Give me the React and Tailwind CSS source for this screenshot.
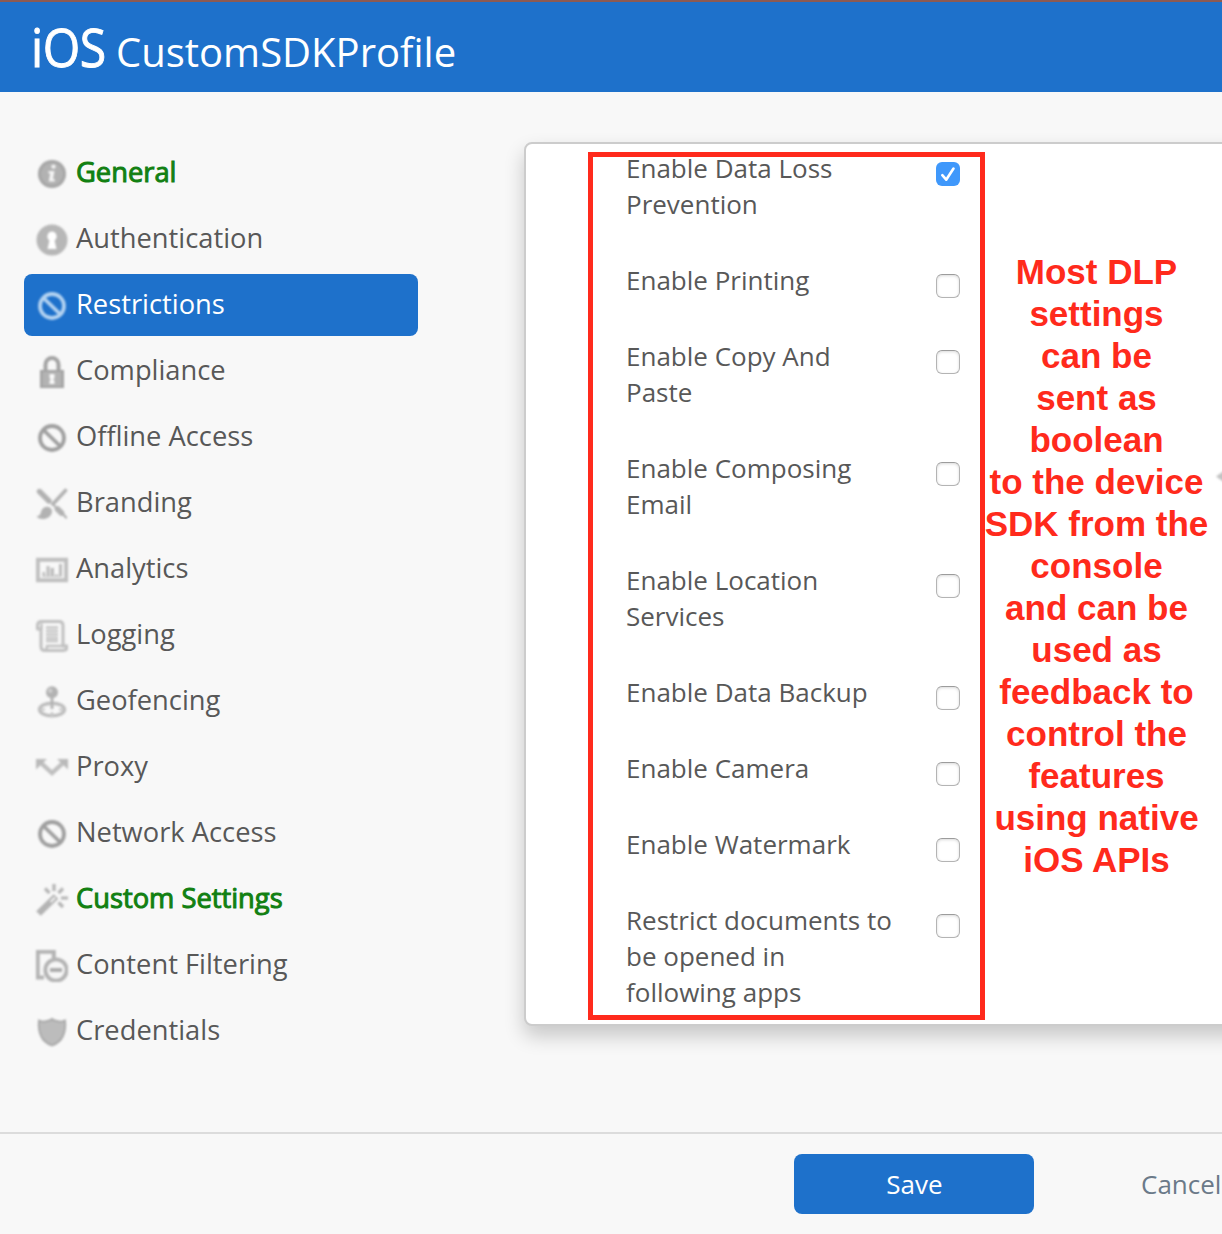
import React from "react";

const Ban = ({ color = "#9f9f9f" }) => (
  <g fill="none" stroke={color} strokeWidth="3.8">
    <circle cx="16" cy="16" r="12" />
    <path d="M8 8.5 23.5 23.5" />
  </g>
);

const icons = {
  info: (
    <>
      <circle cx="16" cy="16" r="14" fill="#a6a6a6" />
      <circle cx="16" cy="16" r="11" fill="#b2b2b2" />
      <circle cx="17.5" cy="8.600" r="2.200" fill="#f4f4f4" />
      <path d="M12.500 13H18.500l-1.500 8h1.700v2.500h-6l1.500-8h-1.700z" fill="#f4f4f4" />
    </>
  ),
  auth: (
    <>
      <circle cx="16" cy="16" r="15.500" fill="#b7b7b7" />
      <path d="M16 7.500a5 5 0 0 1 2.600 9L20.500 25h-9l1.900-8.500A5 5 0 0 1 16 7.500z" fill="#fff" />
    </>
  ),
  banLight: <Ban color="#b4d3f1" />,
  ban: <Ban />,
  lock: (
    <>
      <path d="M9.500 15V8.500a6.500 6.500 0 0 1 13 0V15" fill="none" stroke="#a3a3a3" strokeWidth="4" />
      <path d="M4 14h24v18H4z" fill="#a3a3a3" />
      <path d="M6.500 16h19v14h-19z" fill="#b3b3b3" />
      <path d="M13.500 18h5v4.500h-1v2h1V28h-5v-3.500h1v-2h-1z" fill="#fafafa" />
    </>
  ),
  brush: (
    <g fill="#b2b2b2" stroke="#b2b2b2" strokeLinecap="round">
      <path d="M3.500 3.500 13 13" strokeWidth="5.400" />
      <path d="M29.500 2.500 17 16" strokeWidth="3.600" />
      <path d="M16 15.500 20 19.500" strokeWidth="2" />
      <path d="M21.500 21 25.500 25" strokeWidth="5.600" />
      <path d="M27 26 30 29.500" strokeWidth="2.400" />
      <path d="M2 29c4-1 3-5 5-7.500 2.500-3 7-2.500 8 .5 1 3.500-1.500 6.500-4.500 7.500S4.500 31 2 29z" strokeWidth="1.500" />
    </g>
  ),
  chart: (
    <>
      <path d="M1.800 5.800h28.400v20.400H1.800z" fill="none" stroke="#bfbfbf" strokeWidth="4" />
      <path d="M6.500 22.500v-4.500h2.500v4.500zM10.500 22.500V12h3v10.500zM14.500 22.500V14h3.500v8.500zM19 22.500v-2h3v2zM23 22.500V10h3v12.500z" fill="#bdbdbd" />
      <path d="M6.500 21.500h19.500v1.500H6.500z" fill="#c9c9c9" />
    </>
  ),
  scroll: (
    <>
      <path d="M1.500 9V5.500q0-4 4-4H23q4 0 4 4V26h4v1q0 3.500-4 3.500H9q-4 0-4-4V9H1.500z" fill="none" stroke="#c0c0c0" strokeWidth="3" strokeLinejoin="round" />
      <path d="M5.500 3.500V9M9.500 30q1.500-1 1.500-4h18" fill="none" stroke="#c0c0c0" strokeWidth="2.400" />
      <path d="M10 7.500h12M10 11h12M10 14.500h12M10 18h12M10 21h12" stroke="#c6c6c6" strokeWidth="2.400" />
    </>
  ),
  pin: (
    <>
      <ellipse cx="16" cy="23.500" rx="12.500" ry="6.300" fill="none" stroke="#bdbdbd" strokeWidth="3.400" />
      <path d="M16 10v13" stroke="#b2b2b2" strokeWidth="2.800" />
      <path d="M16 26v5M4 23.500h5M23 23.500h5" stroke="#c6c6c6" strokeWidth="2" />
      <circle cx="16" cy="6.300" r="6" fill="#b2b2b2" />
      <circle cx="14.300" cy="4.800" r="2.200" fill="#cfcfcf" />
    </>
  ),
  proxy: (
    <>
      <path d="M4.500 10.500 16 21 27.500 10.500" fill="none" stroke="#bfbfbf" strokeWidth="4.400" />
      <path d="M0 7h11L0 17.500zM32 7H21L32 17.500z" fill="#bababa" />
    </>
  ),
  wand: (
    <>
      <path d="M2.500 29.500 20 12.500" stroke="#b4b4b4" strokeWidth="6.600" />
      <path d="M14.500 18 19 13.500" stroke="#f4f4f4" strokeWidth="2" />
      <path d="M18 0v7M9 4.500l4.500 4.500M27 4.500 22.500 9M25 14h7M22.500 18.500 27 23" stroke="#b4b4b4" strokeWidth="3.200" />
    </>
  ),
  filter: (
    <>
      <path d="M8 27.500H1.700V1.700h16.100V8" fill="none" stroke="#b3b3b3" strokeWidth="4" />
      <circle cx="20" cy="20" r="10.700" fill="#f6f6f6" stroke="#b3b3b3" strokeWidth="3.800" />
      <path d="M14 20h12" stroke="#a9a9a9" strokeWidth="3.800" />
    </>
  ),
  shield: (
    <path d="M3 4.500q4 2 8.500.3Q14.500 4.500 16 3q1.500 1.500 4.500 1.800Q25 6.500 29 4.500 30 13 27 20 24 26.500 16 29.500 8 26.500 5 20 2 13 3 4.500z" fill="#bcbcbc" stroke="#a8a8a8" strokeWidth="1.800" />
  ),
};

const items = [
  { label: "General", icon: "info", state: "set" },
  { label: "Authentication", icon: "auth" },
  { label: "Restrictions", icon: "banLight", state: "active" },
  { label: "Compliance", icon: "lock" },
  { label: "Offline Access", icon: "ban" },
  { label: "Branding", icon: "brush" },
  { label: "Analytics", icon: "chart" },
  { label: "Logging", icon: "scroll" },
  { label: "Geofencing", icon: "pin" },
  { label: "Proxy", icon: "proxy" },
  { label: "Network Access", icon: "ban" },
  { label: "Custom Settings", icon: "wand", state: "set" },
  { label: "Content Filtering", icon: "filter" },
  { label: "Credentials", icon: "shield" },
];

const itemStyle = {
  active: "bg-[#1e71cb] text-white",
  set: "text-[#128012] [-webkit-text-stroke:1px_#128012]",
  normal: "text-[#585858]",
};

const settings = [
  { lines: ["Enable Data Loss", "Prevention"], on: true },
  { lines: ["Enable Printing"] },
  { lines: ["Enable Copy And", "Paste"] },
  { lines: ["Enable Composing", "Email"] },
  { lines: ["Enable Location", "Services"] },
  { lines: ["Enable Data Backup"] },
  { lines: ["Enable Camera"] },
  { lines: ["Enable Watermark"] },
  { lines: ["Restrict documents to", "be opened in", "following apps"] },
];

const note = [
  "Most DLP", "settings", "can be", "sent as", "boolean", "to the device", "SDK from the", "console",
  "and can be", "used as", "feedback to", "control the", "features", "using native", "iOS APIs",
];

function Checkbox({ on }) {
  if (on) {
    return (
      <span className="mt-3 flex size-6 items-center justify-center rounded-[6px] bg-[#3f98fb]">
        <svg className="size-6" viewBox="0 0 24 24" fill="none" stroke="#fff" strokeWidth="2.600" strokeLinecap="round" strokeLinejoin="round">
          <path d="M6.300 13.200 10.200 17.700 17.500 6.500" />
        </svg>
      </span>
    );
  }
  return <span className="mt-3 size-6 rounded-[6px] border border-[#b4b4b4] border-t-[#9c9c9c] bg-white shadow-[inset_0_1px_3px_rgba(0,0,0,0.15)]" />;
}

export default function App() {
  return (
    <div className="flex h-[1234px] w-[1222px] flex-col overflow-hidden bg-[#f8f8f8] font-['Open_Sans',sans-serif]">
      <header className="flex h-[92px] shrink-0 items-baseline border-t-2 border-[#8d5a52] bg-[#1e71cb] pl-[31px] text-white">
        <span className="w-[85px] origin-left scale-x-[0.91] whitespace-nowrap text-[53px] leading-[90px] tracking-[-0.5px] [-webkit-text-stroke:0.9px_#fff]">iOS</span>
        <h1 className="-mt-px whitespace-nowrap text-[40px] leading-[88px]">CustomSDKProfile</h1>
      </header>

      <main className="flex h-[1040px] shrink-0 pl-6 pt-[50px]">
        <nav className="flex w-[394px] shrink-0 flex-col gap-1">
          {items.map((item) => (
            <a key={item.label} className={`flex h-[62px] shrink-0 items-center gap-2 rounded-lg pl-3 text-[27.3px] leading-[38px] ${itemStyle[item.state || "normal"]}`}>
              <svg className="mt-0.5 size-8 blur-[0.8px]" viewBox="0 0 32 32">{icons[item.icon]}</svg>
              <span className="-mt-0.5 whitespace-nowrap">{item.label}</span>
            </a>
          ))}
        </nav>

        <section className="relative ml-[106px] h-[884px] w-[760px] shrink-0 rounded-lg border-2 border-[#ccc] bg-white pl-[100px] pt-1.5 shadow-[0_10px_20px_rgba(0,0,0,0.2)]">
          <div className="flex flex-col gap-10">
            {settings.map((s) => (
              <div key={s.lines[0]} className="flex items-start">
                <div className="w-[310px] whitespace-nowrap text-[26px] leading-9 text-[#585858]">
                  {s.lines.map((l) => <div key={l}>{l}</div>)}
                </div>
                <Checkbox on={s.on} />
              </div>
            ))}
          </div>
          <div className="absolute left-[62px] top-2 h-[868px] w-[397px] border-[5px] border-[#ff2a1c]" />
          <div className="absolute left-[450px] top-[107px] w-[241px] whitespace-nowrap text-center font-['Liberation_Sans',sans-serif] text-[35px] font-bold leading-[42px] text-[#ff2a1c]">
            {note.map((l) => <div key={l}>{l}</div>)}
          </div>
          <svg className="absolute left-[690px] top-[323px] h-5 w-3 blur-[1px]" viewBox="0 0 12 20">
            <path d="M0 9.500 9 3v13z" fill="#c4c4c4" />
          </svg>
        </section>
      </main>

      <footer className="flex h-[102px] shrink-0 items-start border-t-2 border-[#dcdcdc] pl-[794px] pt-5 text-[26px]">
        <button className="h-[60px] w-[240px] shrink-0 rounded-lg bg-[#1e71cb] pl-px text-white">Save</button>
        <button className="ml-[107px] h-[60px] text-[#6b7a89]">Cancel</button>
      </footer>
    </div>
  );
}
